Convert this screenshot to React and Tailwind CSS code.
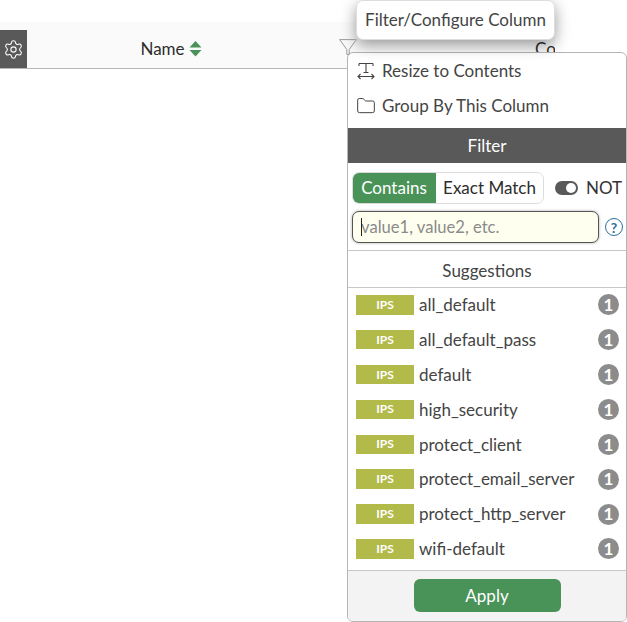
import { Settings, Folder } from "lucide-react";

const suggestions = [
  "all_default",
  "all_default_pass",
  "default",
  "high_security",
  "protect_client",
  "protect_email_server",
  "protect_http_server",
  "wifi-default",
];

function FilterIcon({ className }) {
  return (
    <svg viewBox="0 0 18 16" className={className} fill="none" stroke="#999" strokeWidth="1">
      <path d="M0.6 0.6h16.8L10.2 10.5v4.9H7.8v-4.9z" strokeLinejoin="round" />
    </svg>
  );
}

function ResizeIcon() {
  return (
    <svg viewBox="0 0 18 18" className="w-[18px] h-[18px] shrink-0" fill="none" stroke="#444" strokeWidth="1.1">
      <path d="M2 1.5h14M2 1.5v2.5M16 1.5v2.5M9 1.5v9M6.5 10.5h5" />
      <path d="M1 14.5h16M3.5 12l-2.5 2.5 2.5 2.5M14.5 12l2.5 2.5-2.5 2.5" />
    </svg>
  );
}

export default function App() {
  return (
    <div className="relative w-[627px] h-[622px] bg-white overflow-hidden font-['Lato','Open_Sans',sans-serif] text-[17px] text-[#333]">
      <div className="pt-[22px] w-[555px]">
        <div className="h-[47px] bg-[#fafafa] border-b border-[#b5b5b5] flex items-end">
          <div className="w-[27px] h-[38px] bg-[#595959] flex items-center justify-center shrink-0">
            <Settings className="w-[21px] h-[21px] text-white" strokeWidth={1.2} />
          </div>
          <div className="w-[312px] h-full flex items-center justify-center gap-[4px] pr-[24px] pt-[8px] shrink-0">
            <span className="text-[#2d2d2d]">Name</span>
            <svg viewBox="0 0 12 16" className="w-[13px] h-[16px]" fill="#4a9358">
              <path d="M6 0l6 6.5H0zM0 9h12l-6 6.5z" />
            </svg>
          </div>
          <FilterIcon className="w-[18px] h-[16px] mb-[13px] shrink-0 relative z-30" />
          <span className="ml-[178px] mb-[7px] text-[#2d2d2d] whitespace-nowrap overflow-hidden w-[20px]">Co</span>
        </div>
      </div>

      <div className="absolute left-[356px] top-0 w-[199px] h-[40px] bg-white border border-[#ddd] rounded-[7px] shadow-[0_5px_15px_rgba(0,0,0,0.4)] z-20 flex items-center justify-center text-[#444] whitespace-nowrap">
        Filter/Configure Column
      </div>

      <div className="absolute left-[347px] top-[52px] w-[280px] h-[570px] bg-white border border-[#b5b5b5] rounded-[6px] z-10 flex flex-col overflow-hidden">
        <div className="h-[35px] flex items-center gap-[7px] pl-[9px] text-[#444] shrink-0">
          <ResizeIcon />
          <span>Resize to Contents</span>
        </div>
        <div className="h-[35px] flex items-center gap-[6px] pl-[8px] text-[#444] shrink-0">
          <Folder className="w-[20px] h-[20px] text-[#444]" strokeWidth={1.2} />
          <span>Group By This Column</span>
        </div>
        <div className="h-[35px] mt-[5px] bg-[#595959] text-white flex items-center justify-center shrink-0">Filter</div>

        <div className="flex items-center pl-[4px] pt-[9px] shrink-0">
          <div className="flex h-[32px] w-[192px] border border-[#dcdcdc] rounded-[7px] overflow-hidden">
            <div className="w-[84px] bg-[#4a9358] text-white flex items-center justify-center ml-[-1px]">Contains</div>
            <div className="flex-1 flex items-center justify-center text-[#2d2d2d] whitespace-nowrap">Exact Match</div>
          </div>
          <div className="ml-[11px] w-[23px] h-[14px] rounded-full bg-[#595959] flex items-center justify-end pr-[2px]">
            <div className="w-[10px] h-[10px] rounded-full bg-white" />
          </div>
          <span className="ml-[8px] text-[#333]">NOT</span>
        </div>

        <div className="flex items-center pl-[4px] pt-[7px] shrink-0">
          <div className="relative w-[247px] h-[32px] bg-[#fffff0] border border-[#555] rounded-[7px] shadow-[0_0_3px_rgba(0,0,0,0.35)] flex items-center pl-[8px] text-[16.6px] text-[#8a8a8a]">
            <span className="w-px h-[18px] bg-[#222] absolute left-[8px] top-[6px]" />
            value1, value2, etc.
          </div>
          <div className="ml-[6px] w-[18px] h-[18px] rounded-full border border-[#2a6f9e] text-[#2a6f9e] text-[14px] font-bold flex items-center justify-center">?</div>
        </div>

        <div className="mt-[7px] h-[38px] pt-[3px] border-y border-[#c8c8c8] flex items-center justify-center text-[#444] shrink-0">Suggestions</div>

        <div className="flex-1 flex flex-col mt-[-0.7px]">
          {suggestions.map((name) => (
            <div key={name} className="h-[34.9px] flex items-center pl-[8px] pr-[7px] shrink-0">
              <div className="w-[58px] h-[19.5px] bg-[#b2ba4a] text-white text-[12px] font-bold flex items-center justify-center">IPS</div>
              <span className="ml-[5px] flex-1 text-[#444]">{name}</span>
              <div className="w-[21px] h-[21px] rounded-full bg-[#8c8c8c] text-white font-bold flex items-center justify-center">1</div>
            </div>
          ))}
        </div>

        <div className="h-[51px] pb-[2px] bg-[#f3f3f3] border-t border-[#c8c8c8] flex items-center justify-center shrink-0">
          <div className="w-[147px] h-[33px] pt-[1px] bg-[#4a9358] rounded-[6px] text-white flex items-center justify-center">Apply</div>
        </div>
      </div>
    </div>
  );
}
